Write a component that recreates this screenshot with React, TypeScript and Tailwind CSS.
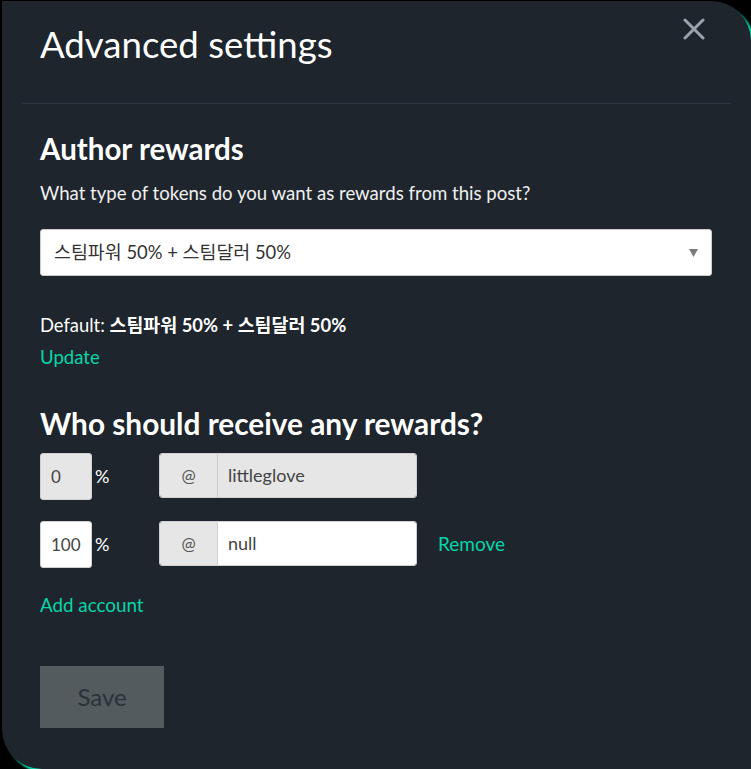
import React from 'react';

const font = { fontFamily: '"Lato", "Noto Sans CJK KR", sans-serif' };

const CloseIcon = () => (
  <svg width="22" height="22" viewBox="0 0 22 22" fill="none">
    <path d="M2 2L20 20M20 2L2 20" stroke="#9ba4ac" strokeWidth="3" strokeLinecap="round" />
  </svg>
);

type RowProps = {
  percent: string;
  account: string;
  disabled?: boolean;
};

const BeneficiaryRow = ({ percent, account, disabled }: RowProps) => {
  return (
    <div className="flex items-start">
      <div className="flex w-[119px] items-center">
        <div
          className={`flex h-[47px] w-[52px] items-center rounded-[3px] border border-[#d0d0d0] pl-[10px] text-[17px] text-[#444] ${
            disabled ? 'bg-[#e6e6e6]' : 'bg-white'
          }`}
        >
          {percent}
        </div>
        <span className="ml-[3px] text-[18px] text-white">%</span>
      </div>
      <div className="flex h-[45px] w-[258px] overflow-hidden rounded-[3px] border border-[#d0d0d0]">
        <div className="flex w-[58px] items-center justify-center border-r border-[#cfcfcf] bg-[#e6e6e6] text-[17px] text-[#555]">
          @
        </div>
        <div
          className={`flex flex-1 items-center pl-[10px] text-[18px] text-[#444] ${
            disabled ? 'bg-[#e6e6e6]' : 'bg-white'
          }`}
        >
          {account}
        </div>
      </div>
      {!disabled && (
        <span className="ml-[21px] flex h-[47px] items-center text-[19px] text-[#06d6a9]">Remove</span>
      )}
    </div>
  );
};

export default function App() {
  return (
    <div className="h-[769px] w-full overflow-hidden bg-black" style={font}>
      <div className="relative ml-[2px] mt-[1px] h-[768px] rounded-tr-[40px] rounded-bl-[40px] bg-[#1e252d] shadow-[4px_4px_2px_#06d6a9]">
        <button className="absolute right-[46px] top-[17px]">
          <CloseIcon />
        </button>

        <header className="pl-[38px] pt-[19px] text-[36.6px] leading-[48px] text-white">Advanced settings</header>
        <div className="mx-[20px] mt-[35px] border-t border-[#2d3640]" />

        <div className="pl-[38px]">
          <h3 className="mt-[27px] text-[29.5px] font-bold leading-[36px] text-white">Author rewards</h3>
          <div className="mt-[12px] text-[18.6px] leading-[28px] text-[#f0f0f0]">
            What type of tokens do you want as rewards from this post?
          </div>

          <div className="mt-[22px] flex h-[47px] w-[672px] items-center justify-between rounded-[3px] border border-[#ccc] bg-white pl-[13px] pr-[13px]">
            <span className="text-[18.4px] text-[#333]">스팀파워 50% + 스팀달러 50%</span>
            <svg width="9" height="8" viewBox="0 0 9 8">
              <path d="M0 0H9L4.5 8Z" fill="#7a7a7a" />
            </svg>
          </div>

          <div className="mt-[33px] text-[18.4px] leading-[32px] text-white">
            Default: <span className="font-bold">스팀파워 50% + 스팀달러 50%</span>
          </div>
          <div className="text-[18.6px] leading-[32px] text-[#06d6a9]">Update</div>

          <h3 className="mt-[31px] text-[29.8px] font-bold leading-[40px] text-white">
            Who should receive any rewards?
          </h3>

          <div className="mt-[9px]">
            <BeneficiaryRow percent="0" account="littleglove" disabled />
          </div>
          <div className="mt-[21px]">
            <BeneficiaryRow percent="100" account="null" />
          </div>

          <div className="mt-[21px] text-[18.8px] leading-[32px] text-[#06d6a9]">Add account</div>

          <button className="mt-[45px] flex h-[62px] w-[124px] items-center justify-center bg-[#535b5f] text-[24px] text-[#2a323a]">
            Save
          </button>
        </div>
      </div>
    </div>
  );
}
